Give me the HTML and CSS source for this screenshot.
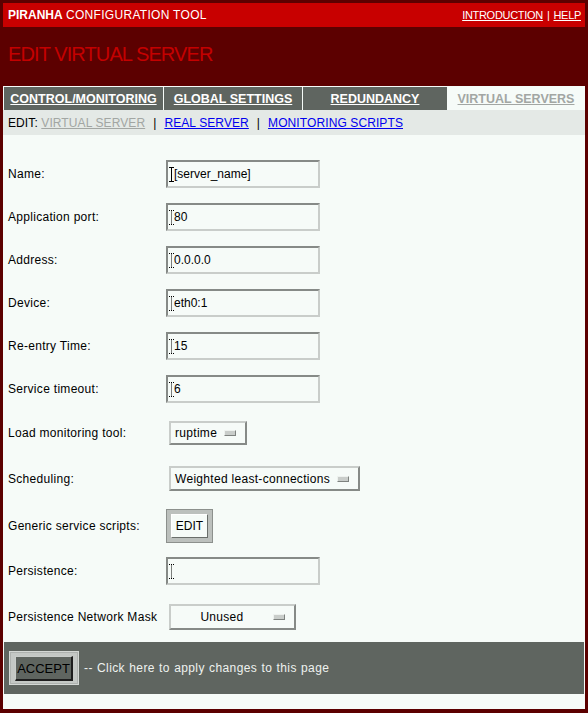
FILE: index.html
```html
<!DOCTYPE html>
<html>
<head>
<meta charset="utf-8">
<title>Piranha Configuration Tool</title>
<link rel="stylesheet" href="styles.css">
</head>
<body>
<div class="topbar">
  <div class="brand"><b>PIRANHA</b> <span class="brand-rest">CONFIGURATION TOOL</span></div>
  <div class="toplinks"><a href="#">INTRODUCTION</a><span class="topsep">|</span><a href="#">HELP</a></div>
</div>
<div class="masthead"><h1>EDIT VIRTUAL SERVER</h1></div>
<div class="content">
  <div class="tabs">
    <a class="tab t1" href="#">CONTROL/MONITORING</a>
    <a class="tab t2" href="#">GLOBAL SETTINGS</a>
    <a class="tab t3" href="#">REDUNDANCY</a>
    <a class="tab t4 active" href="#">VIRTUAL SERVERS</a>
  </div>
  <div class="subnav">EDIT: <a class="current" href="#">VIRTUAL SERVER</a><span class="sep">|</span><a href="#">REAL SERVER</a><span class="sep">|</span><a href="#">MONITORING SCRIPTS</a></div>
  <div class="form">
    <div class="row r43">
      <label class="lbl">Name:</label>
      <span class="field"><svg class="caret" width="5" height="15" viewBox="0 0 5 15"><path d="M0 0.5h5M2.5 0.5v14M0 14.5h5" stroke="#000" stroke-width="1" fill="none"/></svg><input class="txt" type="text" value="[server_name]"></span>
    </div>
    <div class="row r43">
      <label class="lbl">Application port:</label>
      <span class="field"><svg class="caret" width="5" height="15" viewBox="0 0 5 15"><path d="M0 0.5h5M2.5 0.5v14M0 14.5h5" stroke="#000" stroke-width="1" stroke-dasharray="1 1" fill="none"/></svg><input class="txt" type="text" value="80"></span>
    </div>
    <div class="row r43">
      <label class="lbl">Address:</label>
      <span class="field"><svg class="caret" width="5" height="15" viewBox="0 0 5 15"><path d="M0 0.5h5M2.5 0.5v14M0 14.5h5" stroke="#000" stroke-width="1" stroke-dasharray="1 1" fill="none"/></svg><input class="txt" type="text" value="0.0.0.0"></span>
    </div>
    <div class="row r43">
      <label class="lbl">Device:</label>
      <span class="field"><svg class="caret" width="5" height="15" viewBox="0 0 5 15"><path d="M0 0.5h5M2.5 0.5v14M0 14.5h5" stroke="#000" stroke-width="1" stroke-dasharray="1 1" fill="none"/></svg><input class="txt" type="text" value="eth0:1"></span>
    </div>
    <div class="row r43">
      <label class="lbl">Re-entry Time:</label>
      <span class="field"><svg class="caret" width="5" height="15" viewBox="0 0 5 15"><path d="M0 0.5h5M2.5 0.5v14M0 14.5h5" stroke="#000" stroke-width="1" stroke-dasharray="1 1" fill="none"/></svg><input class="txt" type="text" value="15"></span>
    </div>
    <div class="row r43">
      <label class="lbl">Service timeout:</label>
      <span class="field"><svg class="caret" width="5" height="15" viewBox="0 0 5 15"><path d="M0 0.5h5M2.5 0.5v14M0 14.5h5" stroke="#000" stroke-width="1" stroke-dasharray="1 1" fill="none"/></svg><input class="txt" type="text" value="6"></span>
    </div>
    <div class="row r46">
      <label class="lbl">Load monitoring tool:</label>
      <span class="option opt-ruptime"><span class="opt-text">ruptime</span><span class="opt-ind"></span></span>
    </div>
    <div class="row r45">
      <label class="lbl">Scheduling:</label>
      <span class="option opt-sched"><span class="opt-text">Weighted least-connections</span><span class="opt-ind"></span></span>
    </div>
    <div class="row r50">
      <label class="lbl">Generic service scripts:</label>
      <span class="btnframe"><span class="btn-edit">EDIT</span></span>
    </div>
    <div class="row r40">
      <label class="lbl">Persistence:</label>
      <span class="field"><svg class="caret" width="5" height="15" viewBox="0 0 5 15"><path d="M0 0.5h5M2.5 0.5v14M0 14.5h5" stroke="#000" stroke-width="1" stroke-dasharray="1 1" fill="none"/></svg><input class="txt" type="text" value=""></span>
    </div>
    <div class="row r51">
      <label class="lbl">Persistence Network Mask</label>
      <span class="option opt-mask"><span class="opt-text centered">Unused</span><span class="opt-ind"></span></span>
    </div>
  </div>
  <div class="acceptbar">
    <span class="acceptframe"><span class="btn-accept">ACCEPT</span></span>
    <span class="accept-note">-- Click here to apply changes to this page</span>
  </div>
</div>
</body>
</html>
```

FILE: styles.css
```css
html, body {
  margin: 0;
  padding: 0;
}
body {
  background: #5c0000;
  padding: 3px 3px 4px 3px;
  font-family: "Liberation Sans", Arial, sans-serif;
  font-size: 12px;
  color: #000;
}

.topbar {
  height: 24px;
  background: #c80000;
  display: flex;
  align-items: center;
  justify-content: space-between;
  padding: 0 4px 0 5px;
  color: #fff;
}
.brand {
  font-size: 12px;
  line-height: 24px;
}
.brand b {
  font-weight: bold;
}
.brand-rest {
  font-size: 12px;
  letter-spacing: 0.3px;
}
.toplinks {
  font-size: 11px;
  letter-spacing: -0.3px;
  line-height: 24px;
}
.toplinks a {
  color: #fff;
  text-decoration: underline;
}
.topsep {
  margin: 0 4px;
}

.masthead {
  height: 59px;
  box-sizing: border-box;
  padding: 16px 5px 0 5px;
}
.masthead h1 {
  margin: 0;
  font-size: 20px;
  line-height: 22px;
  font-weight: normal;
  letter-spacing: -0.9px;
  color: #c40000;
}

.content {
  background: #f6fbf8;
  padding: 1px 0 15px 0;
}

.tabs {
  display: flex;
  height: 23px;
  margin-left: 1px;
}
.tab {
  display: flex;
  align-items: center;
  justify-content: center;
  background: #5f6560;
  color: #fff;
  font-weight: bold;
  font-size: 12.5px;
  text-decoration: underline;
  box-sizing: border-box;
}
.t1 { width: 159px; }
.t2 { width: 139px; border-left: 1px solid #f6fbf8; }
.t3 { width: 145px; border-left: 1px solid #f6fbf8; }
.t4 { flex: 1; }
.tab.active {
  background: #f6fbf8;
  color: #a2a6a3;
}

.subnav {
  height: 25px;
  box-sizing: border-box;
  background: #e4e9e6;
  padding: 1px 0 0 5px;
  line-height: 24px;
  font-size: 12px;
  letter-spacing: 0.1px;
  color: #000;
}
.subnav a {
  color: #0000ee;
  text-decoration: underline;
}
.subnav a.current {
  color: #a2a6a3;
}
.sep {
  margin: 0 8px;
  color: #000;
}

.form {
  padding: 17px 0 0 5px;
}
.row {
  display: flex;
  align-items: center;
}
.r43 { height: 43px; }
.r46 { height: 46px; }
.r45 { height: 45px; }
.r50 { height: 50px; }
.r40 { height: 40px; }
.r51 { height: 51px; }

.lbl {
  width: 158px;
  flex: none;
  font-size: 12px;
  letter-spacing: 0.3px;
}

.field {
  position: relative;
  display: inline-block;
  width: 154px;
  height: 28px;
}
.caret {
  position: absolute;
  left: 3px;
  top: 7px;
}
.txt {
  width: 154px;
  height: 28px;
  box-sizing: border-box;
  margin: 0;
  border: 2px solid;
  border-color: #868a87 #c9cdca #c9cdca #868a87;
  background: transparent;
  padding: 0 0 0 6px;
  font-family: "Liberation Sans", Arial, sans-serif;
  font-size: 12px;
  color: #000;
  outline: none;
}

.option {
  display: inline-flex;
  align-items: center;
  box-sizing: border-box;
  margin-left: 3px;
  border: 2px solid;
  border-color: #c9cdca #868a87 #868a87 #c9cdca;
  padding: 0 9px 0 4px;
  font-size: 12px;
  letter-spacing: 0.3px;
}
.opt-ruptime { height: 24px; }
.opt-sched { height: 25px; }
.opt-mask { height: 26px; width: 127px; }
.opt-text {
  margin-right: 7px;
}
.opt-text.centered {
  flex: 1;
  text-align: center;
  margin-right: 4px;
}
.opt-ind {
  width: 12px;
  height: 6px;
  box-sizing: border-box;
  border: 1px solid;
  border-color: #eef2ef #7e827f #7e827f #eef2ef;
  background: #c9cdca;
}

.btnframe {
  display: inline-flex;
  box-sizing: border-box;
  width: 47px;
  height: 34px;
  border: 1px solid #8c908d;
  background: #bcc0bd;
  padding: 4px;
}
.btn-edit {
  flex: 1;
  display: flex;
  align-items: center;
  justify-content: center;
  border: 1px solid;
  border-color: #ffffff #6a6e6b #6a6e6b #ffffff;
  background: #f6fbf8;
  font-size: 12px;
}

.acceptbar {
  height: 52px;
  margin: 0 1px;
  background: #5f6560;
  display: flex;
  align-items: center;
  padding-left: 5px;
}
.acceptframe {
  display: inline-flex;
  box-sizing: border-box;
  width: 70px;
  height: 34px;
  border: 1px solid #d4d8d5;
  background: #c4c8c5;
  padding: 4px 5px 3px 5px;
  box-shadow: inset 0 0 0 1px #aeb2af;
}
.btn-accept {
  flex: 1;
  display: flex;
  align-items: center;
  justify-content: center;
  border-style: solid;
  border-width: 1px 2px 2px 1px;
  border-color: #c9cdca #1e1e1e #1e1e1e #c9cdca;
  background: #5f6560;
  color: #000;
  font-size: 13px;
}
.accept-note {
  margin-left: 5px;
  color: #eef2ef;
  font-size: 12px;
  letter-spacing: 0.4px;
  word-spacing: 0.5px;
}
```
